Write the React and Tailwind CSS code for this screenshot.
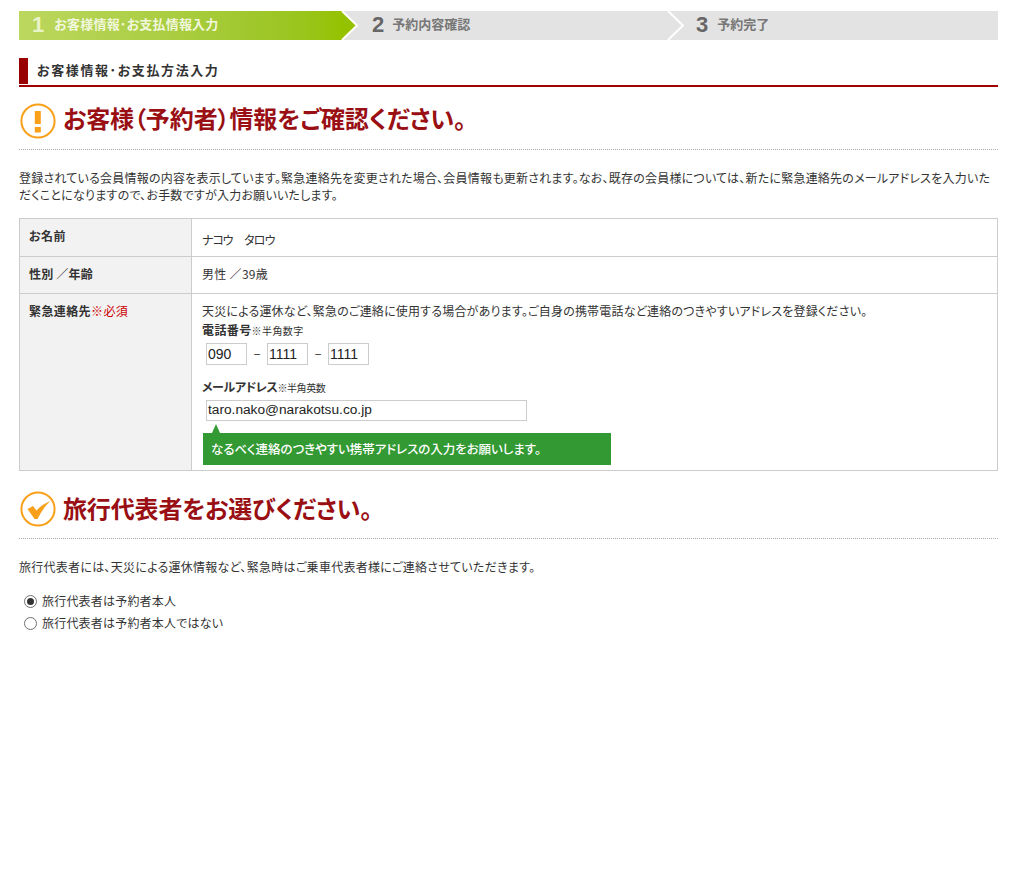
import React from "react";

const jp = "font-['Noto_Sans_CJK_JP','Noto_Sans',sans-serif]";

function Chevron({ color }) {
  return (
    <svg width="18" height="29" viewBox="0 0 18 29" className="absolute right-[-17px] top-0 z-10">
      <polygon points="1,0 16,14.5 1,29 0,29 0,0" fill={color} />
      <polyline points="1,0 16,14.5 1,29" fill="none" stroke="#fff" strokeWidth="2" />
    </svg>
  );
}

function Step({ n, label, className, labelClass, active, chevron }) {
  return (
    <div className={`relative flex h-[29px] items-center pb-[2px] ${className}`}>
      <span className={`font-['Liberation_Sans',sans-serif] text-[22px] leading-none font-bold ${active ? "text-[#e9f3c8]" : "text-[#666666]"}`}>{n}</span>
      <span className={`${labelClass} -translate-y-[1px] text-[13px] font-bold ${active ? "text-[#f1f7dc]" : "text-[#777777]"}`}>{label}</span>
      {chevron && <Chevron color={chevron} />}
    </div>
  );
}

function AlertIcon() {
  return (
    <svg width="36" height="36" viewBox="0 0 36 36" className="shrink-0">
      <circle cx="18" cy="18" r="16.6" fill="#fff" stroke="#f9a01b" strokeWidth="2" />
      <rect x="14.8" y="8" width="6" height="13" fill="#f9a01b" />
      <rect x="14.8" y="24" width="6" height="5.5" fill="#f9a01b" />
    </svg>
  );
}

function CheckIcon() {
  return (
    <svg width="36" height="36" viewBox="0 0 36 36" className="shrink-0">
      <circle cx="18" cy="18" r="16.6" fill="#fff" stroke="#f9a01b" strokeWidth="2" />
      <path d="M7.5 18 L13 15 L16.5 19.5 C20 15.5 25 12 30.5 10 C25 15 21 21 17.5 28 L14.5 28 Z" fill="#f9a01b" />
    </svg>
  );
}

function Radio({ checked, label }) {
  return (
    <label className="flex h-[22px] items-center pl-[5px]">
      <span className="flex h-[13px] w-[13px] items-center justify-center rounded-full border border-[#6f6f6f] bg-white">
        {checked && <span className="h-[7px] w-[7px] rounded-full bg-[#333333]" />}
      </span>
      <span className="ml-[5px] text-[12px] tracking-[0.2px] text-[#333333]">{label}</span>
    </label>
  );
}

function PhoneField({ value }) {
  return (
    <span className="flex h-[22px] w-[41px] items-center border border-[#cccccc] bg-white pl-[1px] font-['Liberation_Sans',sans-serif] text-[14px] text-[#222222]">
      {value}
    </span>
  );
}

export default function App() {
  return (
    <div className={`min-h-[878px] bg-white pt-[11px] pr-[26px] pl-[19px] ${jp} [font-feature-settings:'palt'] text-[12px] text-[#333333]`}>
      <div className="flex h-[29px] bg-[#e3e3e3]">
        <Step n="1" label="お客様情報･お支払情報入力" active chevron="#95c200" labelClass="ml-[10px] tracking-[0.2px]"
          className="w-[323px] bg-gradient-to-r from-[#bcd75e] to-[#95c200] pl-[13px]" />
        <Step n="2" label="予約内容確認" chevron="#e3e3e3" labelClass="ml-[8px]" className="w-[326px] pl-[30px]" />
        <Step n="3" label="予約完了" labelClass="ml-[9px]" className="flex-1 pl-[28px]" />
      </div>

      <div className="mt-[18px] flex h-[29px] items-center border-b-2 border-[#a00000] pb-[1px]">
        <span className="mr-[9px] h-full w-[9px] self-stretch bg-[#990000]" />
        <h2 className="-mt-[2px] text-[13px] font-bold tracking-[1.6px] text-[#333333]">お客様情報･お支払方法入力</h2>
      </div>

      <div className="mt-[16px] flex h-[36px] items-center pl-[1px]">
        <AlertIcon />
        <h1 className="ml-[7px] -translate-y-[3px] text-[24px] leading-none font-bold tracking-[-0.1px] text-[#990f14]">お客様（予約者）情報をご確認ください。</h1>
      </div>
      <div className="mt-[10px] border-t border-dotted border-[#aaaaaa]" />

      <p className="mt-[19px] text-[12px] leading-[17px] tracking-[0.22px]">
        登録されている会員情報の内容を表示しています。緊急連絡先を変更された場合、会員情報も更新されます。なお、既存の会員様については、新たに緊急連絡先のメールアドレスを入力いただくことになりますので、お手数ですが入力お願いいたします。
      </p>

      <div className="mt-[15px] grid grid-cols-[172px_1fr] border border-[#cccccc]">
        <div className="h-[38px] border-r border-b border-[#cccccc] bg-[#f2f2f2] pt-[8px] pl-[9px] font-bold tracking-[0.4px]">お名前</div>
        <div className="h-[38px] border-b border-[#cccccc] pt-[12px] pl-[10px] tracking-[-0.8px]">ナコウ　タロウ</div>

        <div className="h-[37px] border-r border-b border-[#cccccc] bg-[#f2f2f2] pt-[8px] pl-[9px] font-bold tracking-[0.2px]">性別 ／年齢</div>
        <div className="h-[37px] border-b border-[#cccccc] pt-[8px] pl-[10px] tracking-[0.3px]">男性 ／39歳</div>

        <div className="border-r border-[#cccccc] bg-[#f2f2f2] pt-[8px] pl-[9px] font-bold tracking-[0.4px]">
          緊急連絡先<span className="font-normal text-[#cc0000]">※必須</span>
        </div>
        <div className="h-[176px] pt-[9px] pl-[10px]">
          <p className="leading-[15px] tracking-[0.2px]">天災による運休など、緊急のご連絡に使用する場合があります。ご自身の携帯電話など連絡のつきやすいアドレスを登録ください。</p>
          <p className="mt-[4px] leading-[15px] font-bold tracking-[0.4px]">電話番号<span className="text-[10px] font-normal">※半角数字</span></p>
          <div className="mt-[5px] flex items-center pl-[4px]">
            <PhoneField value="090" />
            <span className="w-[20px] text-center">−</span>
            <PhoneField value="1111" />
            <span className="w-[20px] text-center">−</span>
            <PhoneField value="1111" />
          </div>
          <p className="mt-[14px] leading-[15px] font-bold tracking-[-0.4px]">メールアドレス<span className="text-[10px] font-normal">※半角英数</span></p>
          <div className="mt-[5px] ml-[4px] flex h-[21px] w-[321px] items-center border border-[#cccccc] pl-[1px] font-['Liberation_Sans',sans-serif] text-[13.7px] text-[#222222]">
            taro.nako@narakotsu.co.jp
          </div>
          <div className="relative mt-[12px] ml-[1px] flex h-[32px] w-[408px] items-center bg-[#339933] pl-[8px] text-[12.5px] font-medium tracking-[-0.05px] text-white">
            <span className="absolute top-[-9px] left-[9px] h-0 w-0 border-x-[4px] border-b-[9px] border-x-transparent border-b-[#339933]" />
            なるべく連絡のつきやすい携帯アドレスの入力をお願いします。
          </div>
        </div>
      </div>

      <div className="mt-[20px] flex h-[36px] items-center pl-[1px]">
        <CheckIcon />
        <h1 className="ml-[7px] -translate-y-[1px] text-[24px] leading-none font-bold tracking-[-0.15px] text-[#990f14]">旅行代表者をお選びください。</h1>
      </div>
      <div className="mt-[11px] border-t border-dotted border-[#aaaaaa]" />

      <p className="mt-[20px] leading-[15px] tracking-[0.27px]">旅行代表者には、天災による運休情報など、緊急時はご乗車代表者様にご連絡させていただきます。</p>

      <div className="mt-[16px]">
        <Radio checked label="旅行代表者は予約者本人" />
        <Radio label="旅行代表者は予約者本人ではない" />
      </div>
    </div>
  );
}
